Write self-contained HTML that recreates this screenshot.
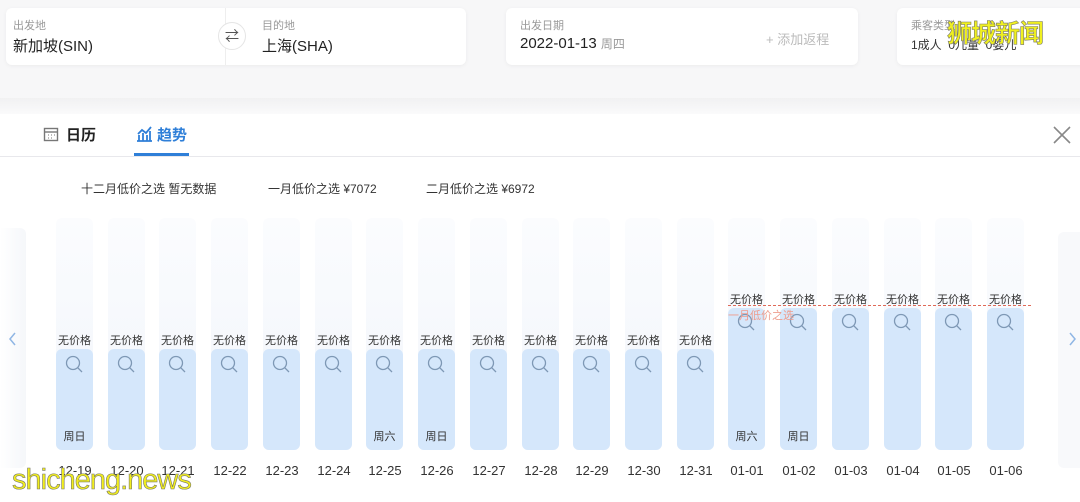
<!DOCTYPE html><html><head><meta charset="utf-8"><style>
*{margin:0;padding:0;box-sizing:border-box}
body{width:1080px;height:502px;overflow:hidden;background:#fff;font-family:"Liberation Sans","Noto Sans CJK SC",sans-serif;position:relative;color:#333}
.a{position:absolute}
.card{position:absolute;background:#fff;border-radius:6px;box-shadow:0 1px 4px rgba(0,0,0,.05)}
.lb{font-size:11px;color:#999}
.v{font-size:15px;color:#222}
.col{position:absolute;width:37px;top:218px;height:232px;background:linear-gradient(#fbfcfe,#f1f5fb);border-radius:6px}
.bar{position:absolute;left:0;right:0;bottom:0;background:#d5e7fb;border-radius:6px}
.np{position:absolute;left:-4px;width:45px;text-align:center;font-size:11px;color:#333}
.q{position:absolute;left:9px;width:19px;height:19px}
.wd{position:absolute;bottom:6px;width:100%;text-align:center;font-size:11px;color:#333}
.d{position:absolute;top:463px;width:52px;margin-left:-7px;text-align:center;font-size:13px;color:#333}
</style></head><body>
<div class="a" style="left:0;top:0;width:1080px;height:98px;background:#f7f7f8"></div>
<div class="card" style="left:6px;top:8px;width:460px;height:57px"></div>
<div class="a lb" style="left:13px;top:17px">出发地</div>
<div class="a v" style="left:13px;top:35px">新加坡(SIN)</div>
<div class="a" style="left:225px;top:8px;width:1px;height:57px;background:#eee"></div>
<div class="a" style="left:218px;top:22px;width:28px;height:28px;border-radius:50%;background:#fff;border:1px solid #e5e5e5;font-size:14px;text-align:center;line-height:26px;color:#555">⇄</div>
<div class="a lb" style="left:262px;top:17px">目的地</div>
<div class="a v" style="left:262px;top:35px">上海(SHA)</div>
<div class="card" style="left:506px;top:8px;width:352px;height:57px"></div>
<div class="a lb" style="left:520px;top:17px">出发日期</div>
<div class="a v" style="left:520px;top:35px">2022-01-13 <span style="font-size:12px;color:#999">周四</span></div>
<div class="a" style="left:766px;top:29px;font-size:13px;color:#bbb">+ 添加返程</div>
<div class="card" style="left:897px;top:8px;width:190px;height:57px"></div>
<div class="a lb" style="left:911px;top:17px">乘客类型</div>
<div class="a" style="left:911px;top:36px;font-size:12px;color:#333">1成人 &nbsp;0儿童 &nbsp;0婴儿</div>
<div class="a" style="left:947px;top:14px;font-size:25px;font-weight:bold;color:#f0f020;-webkit-text-stroke:0.6px #776;letter-spacing:-1px">狮城新闻</div>
<div class="a" style="left:0;top:98px;width:1080px;height:16px;background:linear-gradient(#f1f1f2,#fafafb)"></div>
<div class="a" style="left:0;top:156px;width:1080px;height:1px;background:#e8e8ec"></div>
<svg class="a" style="left:43px;top:126px" width="16" height="16" viewBox="0 0 16 16"><rect x="1.5" y="2.5" width="13" height="12" fill="none" stroke="#777" stroke-width="1.4"/><line x1="1.5" y1="6" x2="14.5" y2="6" stroke="#777" stroke-width="1.4"/><path d="M5 9h1M8 9h1M11 9h1M5 12h1M8 12h1" stroke="#777"/></svg>
<div class="a" style="left:66px;top:124px;font-size:15px;font-weight:bold;color:#222">日历</div>
<svg class="a" style="left:136px;top:125px" width="17" height="17" viewBox="0 0 17 17"><path d="M1 16h15M3 16V10M7 16V8M11 16V10M14 16V6M2 9l4-4 4 3 5-6" fill="none" stroke="#2f7fd8" stroke-width="1.8"/></svg>
<div class="a" style="left:157px;top:124px;font-size:15px;font-weight:bold;color:#2f7fd8">趋势</div>
<div class="a" style="left:134px;top:153px;width:55px;height:3px;background:#2f7fd8"></div>
<svg class="a" style="left:1052px;top:125px" width="20" height="20"><path d="M2 2L18 18M18 2L2 18" stroke="#888" stroke-width="1.6"/></svg>
<div class="a" style="left:81px;top:180px;font-size:12px;color:#333">十二月低价之选 暂无数据</div>
<div class="a" style="left:268px;top:180px;font-size:12px;color:#333">一月低价之选 ¥7072</div>
<div class="a" style="left:426px;top:180px;font-size:12px;color:#333">二月低价之选 ¥6972</div>
<div class="a" style="left:0;top:228px;width:26px;height:240px;background:linear-gradient(90deg,#fff,#f5f7fa);border-radius:0 6px 6px 0"></div>
<div class="a" style="left:1058px;top:232px;width:22px;height:236px;background:#f8f9fb;border-radius:6px 0 0 6px"></div>
<svg class="a" style="left:8px;top:332px" width="10" height="14"><path d="M7 1L2 7l5 6" fill="none" stroke="#8fb6e4" stroke-width="1.5"/></svg>
<svg class="a" style="left:1068px;top:332px" width="10" height="14"><path d="M2 1l5 6-5 6" fill="none" stroke="#8fb6e4" stroke-width="1.5"/></svg>
<svg width="0" height="0" style="position:absolute"><defs><g id="m"><circle cx="8" cy="8" r="6.5" fill="none" stroke="#7e98b5" stroke-width="1.3"/><path d="M12.7 12.7L17 17" stroke="#7e98b5" stroke-width="1.3"/></g></defs></svg>

<div class="col" style="left:56px"><div class="np" style="top:114px">无价格</div><div class="bar" style="height:101px"></div><svg class="q" style="top:137px"><use href="#m"/></svg><div class="wd">周日</div></div>
<div class="col" style="left:108px"><div class="np" style="top:114px">无价格</div><div class="bar" style="height:101px"></div><svg class="q" style="top:137px"><use href="#m"/></svg></div>
<div class="col" style="left:159px"><div class="np" style="top:114px">无价格</div><div class="bar" style="height:101px"></div><svg class="q" style="top:137px"><use href="#m"/></svg></div>
<div class="col" style="left:211px"><div class="np" style="top:114px">无价格</div><div class="bar" style="height:101px"></div><svg class="q" style="top:137px"><use href="#m"/></svg></div>
<div class="col" style="left:263px"><div class="np" style="top:114px">无价格</div><div class="bar" style="height:101px"></div><svg class="q" style="top:137px"><use href="#m"/></svg></div>
<div class="col" style="left:315px"><div class="np" style="top:114px">无价格</div><div class="bar" style="height:101px"></div><svg class="q" style="top:137px"><use href="#m"/></svg></div>
<div class="col" style="left:366px"><div class="np" style="top:114px">无价格</div><div class="bar" style="height:101px"></div><svg class="q" style="top:137px"><use href="#m"/></svg><div class="wd">周六</div></div>
<div class="col" style="left:418px"><div class="np" style="top:114px">无价格</div><div class="bar" style="height:101px"></div><svg class="q" style="top:137px"><use href="#m"/></svg><div class="wd">周日</div></div>
<div class="col" style="left:470px"><div class="np" style="top:114px">无价格</div><div class="bar" style="height:101px"></div><svg class="q" style="top:137px"><use href="#m"/></svg></div>
<div class="col" style="left:522px"><div class="np" style="top:114px">无价格</div><div class="bar" style="height:101px"></div><svg class="q" style="top:137px"><use href="#m"/></svg></div>
<div class="col" style="left:573px"><div class="np" style="top:114px">无价格</div><div class="bar" style="height:101px"></div><svg class="q" style="top:137px"><use href="#m"/></svg></div>
<div class="col" style="left:625px"><div class="np" style="top:114px">无价格</div><div class="bar" style="height:101px"></div><svg class="q" style="top:137px"><use href="#m"/></svg></div>
<div class="col" style="left:677px"><div class="np" style="top:114px">无价格</div><div class="bar" style="height:101px"></div><svg class="q" style="top:137px"><use href="#m"/></svg></div>
<div class="col" style="left:728px"><div class="np" style="top:73px">无价格</div><div class="bar" style="height:142px"></div><svg class="q" style="top:95px"><use href="#m"/></svg><div class="wd">周六</div></div>
<div class="col" style="left:780px"><div class="np" style="top:73px">无价格</div><div class="bar" style="height:142px"></div><svg class="q" style="top:95px"><use href="#m"/></svg><div class="wd">周日</div></div>
<div class="col" style="left:832px"><div class="np" style="top:73px">无价格</div><div class="bar" style="height:142px"></div><svg class="q" style="top:95px"><use href="#m"/></svg></div>
<div class="col" style="left:884px"><div class="np" style="top:73px">无价格</div><div class="bar" style="height:142px"></div><svg class="q" style="top:95px"><use href="#m"/></svg></div>
<div class="col" style="left:935px"><div class="np" style="top:73px">无价格</div><div class="bar" style="height:142px"></div><svg class="q" style="top:95px"><use href="#m"/></svg></div>
<div class="col" style="left:987px"><div class="np" style="top:73px">无价格</div><div class="bar" style="height:142px"></div><svg class="q" style="top:95px"><use href="#m"/></svg></div>
<div class="a" style="left:728px;top:305px;width:303px;border-top:1px dashed #e06a58"></div>
<div class="a" style="left:728px;top:307px;font-size:11px;color:#ee9d8e">一月低价之选</div>

<div class="d" style="left:56px">12-19</div><div class="d" style="left:108px">12-20</div><div class="d" style="left:159px">12-21</div><div class="d" style="left:211px">12-22</div><div class="d" style="left:263px">12-23</div><div class="d" style="left:315px">12-24</div><div class="d" style="left:366px">12-25</div><div class="d" style="left:418px">12-26</div><div class="d" style="left:470px">12-27</div><div class="d" style="left:522px">12-28</div><div class="d" style="left:573px">12-29</div><div class="d" style="left:625px">12-30</div><div class="d" style="left:677px">12-31</div><div class="d" style="left:728px">01-01</div><div class="d" style="left:780px">01-02</div><div class="d" style="left:832px">01-03</div><div class="d" style="left:884px">01-04</div><div class="d" style="left:935px">01-05</div><div class="d" style="left:987px">01-06</div>
<div class="a" style="left:12px;top:464px;font-size:29px;color:#f2ee1e;-webkit-text-stroke:0.6px #776;letter-spacing:-1px">shicheng.news</div>
</body></html>
